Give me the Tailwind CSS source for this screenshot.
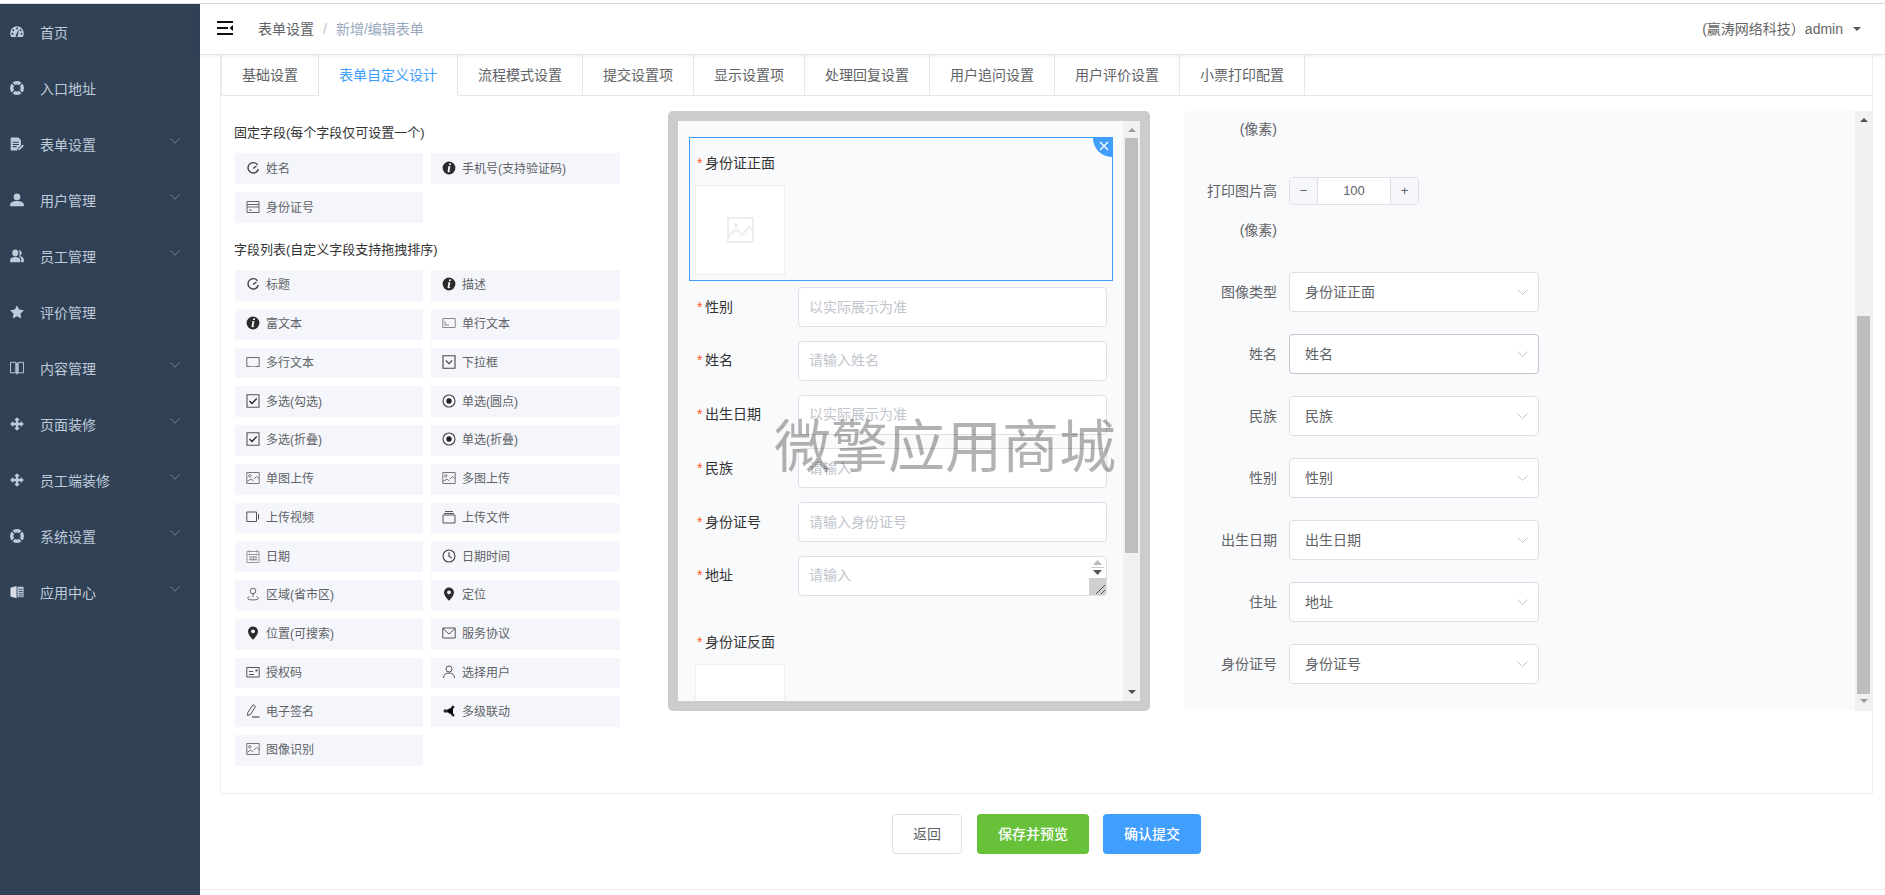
<!DOCTYPE html>
<html lang="zh">
<head>
<meta charset="utf-8">
<title>新增/编辑表单</title>
<script src="https://cdn.jsdelivr.net/npm/@tailwindcss/browser@4"></script>
</head>
<body class="font-['Liberation_Sans','Noto_Sans_CJK_SC',sans-serif] bg-white text-[14px] text-[#606266]">
<svg class="hidden" xmlns="http://www.w3.org/2000/svg">
<defs>
<symbol id="s-gauge" viewBox="0 0 16 16"><path fill="currentColor" d="M8 1.500A7.800 7.800 0 0 0 .2 9.300c0 1.700.5 3.100 1.200 4.300h13.200c.7-1.200 1.200-2.600 1.200-4.300A7.800 7.800 0 0 0 8 1.500z"/><g fill="#304156"><circle cx="8" cy="4" r="1.100"/><circle cx="3.800" cy="6" r="1.100"/><circle cx="12.200" cy="6" r="1.100"/><circle cx="2.800" cy="10" r="1.100"/><circle cx="13.200" cy="10" r="1.100"/><path d="M7 11l2.500-5 .6.3L9 11.500a1.300 1.300 0 1 1-2-.5z"/></g></symbol>
<symbol id="s-ring" viewBox="0 0 16 16"><circle cx="8" cy="8" r="6" fill="none" stroke="currentColor" stroke-width="4"/><path stroke="#304156" stroke-width="1.400" d="M2 2l3.300 3.300M14 2l-3.300 3.300M2 14l3.300-3.300M14 14l-3.300-3.300"/></symbol>
<symbol id="s-doc" viewBox="0 0 16 16"><path fill="currentColor" d="M.8.500h8.700l3 3v5.800L8.500 13.500V15.500H.8z"/><path stroke="#304156" stroke-width="1.200" d="M3 6h7M3 8.500h7M3 11h4.500"/><path fill="currentColor" d="M9.500 15.200l.4-2 4.600-4.600 1.400 1.400-4.500 4.700z"/></symbol>
<symbol id="s-user" viewBox="0 0 16 16"><circle cx="8" cy="4.500" r="3.800" fill="currentColor"/><path fill="currentColor" d="M.2 15v-2c0-2.600 3.300-4 7.800-4s7.800 1.400 7.800 4v2z"/></symbol>
<symbol id="s-users" viewBox="0 0 16 16"><ellipse cx="6" cy="4.500" rx="3.500" ry="4" fill="currentColor"/><path fill="currentColor" d="M.2 15v-2.500C.2 10.300 2.800 9 6 9s5.800 1.300 5.800 3.500V15z"/><path fill="currentColor" d="M10 1c2 .2 3.400 1.700 3.400 3.600 0 1.600-1 2.900-2.300 3.400 2.800.5 4.700 2 4.700 3.900V15h-3v-3c0-1.500-1-2.700-2.500-3.400C11.200 7.400 11.300 3 10 1z"/></symbol>
<symbol id="s-star" viewBox="0 0 16 16"><path fill="currentColor" d="M8 .2l2.400 5 5.500.8-4 3.900 1 5.500L8 12.800l-4.900 2.600 1-5.500-4-3.900 5.500-.8z"/></symbol>
<symbol id="s-book" viewBox="0 0 16 16"><path fill="none" stroke="currentColor" stroke-width="1.100" d="M.6 1.500h6v12h-6zM9.400 1.500h6v12h-6z"/><path stroke="currentColor" stroke-width="2" d="M8 2v13"/></symbol>
<symbol id="s-move" viewBox="0 0 16 16"><path fill="currentColor" d="M8 .2l3.500 3.500H9.300v3h3V4.500L15.800 8l-3.500 3.500V9.300h-3v3h2.200L8 15.800l-3.500-3.500h2.200v-3h-3v2.200L.2 8l3.500-3.500v2.200h3v-3H4.500z"/></symbol>
<symbol id="s-app" viewBox="0 0 16 16"><path fill="#d5dde6" d="M.5 3l7-2v14l-7-2z"/><path fill="currentColor" d="M8.500 2h7v12h-7z"/><path stroke="#304156" stroke-width="1" d="M10 5h4.500M10 7.500h4.500M10 10h4.500M10 12.500h4.500"/></symbol>

<symbol id="i-c" viewBox="0 0 14 14"><path fill="none" stroke="#444" stroke-width="1.400" d="M11.500 3.800A5.200 5.200 0 1 0 12.300 8"/><path fill="none" stroke="#444" stroke-width="1.300" d="M7 7.500l3.500-2.500"/></symbol>
<symbol id="i-info" viewBox="0 0 14 14"><circle cx="7" cy="7" r="6.400" fill="#2b2b2b"/><path fill="#fff" d="M7.200 2.400h1.900l-.3 1.700H6.900zM6.500 5.200h1.900L7.400 10c0 .3.300.3.800 0l.1.600c-1 .8-2.700 1-2.700-.3l.8-4.300h-.8z"/></symbol>
<symbol id="i-card" viewBox="0 0 14 14"><path fill="none" stroke="#666" stroke-width="1" d="M1 1.500h12v11H1zM1 4.500h12M1 7h12M3 10h3"/></symbol>
<symbol id="i-input" viewBox="0 0 14 14"><path fill="none" stroke="#888" stroke-width="1" d="M.8 2.500h12.400v9H.8zM3 5v4h4"/></symbol>
<symbol id="i-area" viewBox="0 0 14 14"><path fill="none" stroke="#666" stroke-width="1" d="M.8 11.500v-9h12.400v9M.8 11.500h3M10 11.500h3.200"/><path stroke="#999" d="M4 11.500h6"/></symbol>
<symbol id="i-select" viewBox="0 0 14 14"><path fill="none" stroke="#444" stroke-width="1.100" d="M1 .8h12v12.400H1zM3.800 5.500L7 8.700l3.200-3.200"/></symbol>
<symbol id="i-check" viewBox="0 0 14 14"><path fill="none" stroke="#555" stroke-width="1.100" d="M1 .8h12v12.400H1z"/><path fill="none" stroke="#222" stroke-width="1.300" d="M3.500 7l2.500 2.500 4.700-5"/></symbol>
<symbol id="i-radio" viewBox="0 0 14 14"><circle cx="7" cy="7" r="6" fill="none" stroke="#444" stroke-width="1.100"/><circle cx="7" cy="7" r="2.700" fill="#222"/></symbol>
<symbol id="i-image" viewBox="0 0 14 14"><path fill="none" stroke="#777" stroke-width="1" d="M.8 1.500h12.400v11H.8zM.8 10.500L5 8l2.500 2M8 8l2.500-2.500 2.700 2"/><circle cx="3.800" cy="4.800" r="1.200" fill="none" stroke="#777"/></symbol>
<symbol id="i-video" viewBox="0 0 14 14"><path fill="none" stroke="#555" stroke-width="1" d="M.8 2h9.700v9.500H.8zM12.500 4v5.500"/></symbol>
<symbol id="i-file" viewBox="0 0 14 14"><path fill="none" stroke="#555" stroke-width="1" d="M1 5h12v8H1z"/><path stroke="#555" stroke-width="1.100" d="M3 1.500h8M2 3.500h10"/></symbol>
<symbol id="i-cal" viewBox="0 0 14 14"><path fill="none" stroke="#999" stroke-width="1" d="M1 2.500h12v11H1zM1 5.500h12M3.500 1v2.500M10.500 1v2.500M3 8h8M3 10.500h8M5 7v5M7.500 7v5M10 7v5"/></symbol>
<symbol id="i-clock" viewBox="0 0 14 14"><circle cx="7" cy="7" r="6" fill="none" stroke="#444" stroke-width="1.100"/><path fill="none" stroke="#444" stroke-width="1.100" d="M7 3.300V7.500l2.700 1.500"/></symbol>
<symbol id="i-region" viewBox="0 0 14 14"><circle cx="7" cy="4" r="2.800" fill="none" stroke="#666" stroke-width="1"/><path fill="none" stroke="#666" stroke-width="1" d="M7 6.800V10M3.500 9.500C2 10 1.500 11 2 12c.8 1.200 9.200 1.200 10 0 .5-1-.2-2-1.500-2.500"/></symbol>
<symbol id="i-pin" viewBox="0 0 14 14"><path fill="#2b2b2b" d="M7 .5a5 5 0 0 0-5 5C2 9 7 13.800 7 13.800S12 9 12 5.500a5 5 0 0 0-5-5z"/><circle cx="7" cy="5.300" r="1.900" fill="#f4f6fb"/></symbol>
<symbol id="i-mail" viewBox="0 0 14 14"><path fill="none" stroke="#555" stroke-width="1" d="M.8 2h12.400v10H.8zM1 2.500L7 8l6-5.500"/></symbol>
<symbol id="i-auth" viewBox="0 0 14 14"><path fill="none" stroke="#555" stroke-width="1" d="M.8 2.500h12.400v9.500H.8zM3 9.500h5M3 6.500h4"/><path stroke="#222" stroke-width="1.500" d="M9.500 5.500h2"/></symbol>
<symbol id="i-person" viewBox="0 0 14 14"><circle cx="7" cy="4" r="3" fill="none" stroke="#555" stroke-width="1"/><path fill="none" stroke="#555" stroke-width="1" d="M1.500 13c0-3.500 2.500-5 5.500-5s5.500 1.500 5.500 5"/></symbol>
<symbol id="i-sign" viewBox="0 0 14 14"><path fill="none" stroke="#555" stroke-width="1" d="M1.500 11.500l.3-3L7 .8l2.500 1.700-5 8z"/><path stroke="#333" stroke-width="1" d="M6 13h7.500"/></symbol>
<symbol id="i-share" viewBox="0 0 14 14"><path stroke="#333" stroke-width="1" d="M11 3L3.500 7l7.500 4"/><circle cx="11" cy="3" r="1.500" fill="#2b2b2b"/><circle cx="3.300" cy="7" r="1.800" fill="#2b2b2b"/><circle cx="11" cy="11" r="1.500" fill="#2b2b2b"/></symbol>
</defs>
</svg>

<div class="flex h-[895px] w-[1885px] flex-col overflow-hidden">
  <div class="h-[4px] shrink-0 border-b border-[#dcdcdc] bg-white"></div>
  <div class="flex min-h-0 flex-1">
    <!-- sidebar -->
    <aside class="w-[200px] shrink-0 bg-[#304156] text-[#bfcbd9]">
      <div class="flex h-[56px] items-center pl-[10px]"><svg class="size-[14px]"><use href="#s-gauge"/></svg><span class="ml-[16px] pt-[2px]">首页</span></div>
      <div class="flex h-[56px] items-center pl-[10px]"><svg class="size-[14px]"><use href="#s-ring"/></svg><span class="ml-[16px] pt-[2px]">入口地址</span></div>
      <div class="flex h-[56px] items-center pl-[10px]"><svg class="size-[14px]"><use href="#s-doc"/></svg><span class="ml-[16px] flex-1 pt-[2px]">表单设置</span><svg class="mr-[20px] mb-[6px] h-[6px] w-[10px]" viewBox="0 0 10 6"><path fill="none" stroke="#6f7f91" d="M.5.500L5 5.200 9.500.500"/></svg></div>
      <div class="flex h-[56px] items-center pl-[10px]"><svg class="size-[14px]"><use href="#s-user"/></svg><span class="ml-[16px] flex-1 pt-[2px]">用户管理</span><svg class="mr-[20px] mb-[6px] h-[6px] w-[10px]" viewBox="0 0 10 6"><path fill="none" stroke="#6f7f91" d="M.5.500L5 5.200 9.500.500"/></svg></div>
      <div class="flex h-[56px] items-center pl-[10px]"><svg class="size-[14px]"><use href="#s-users"/></svg><span class="ml-[16px] flex-1 pt-[2px]">员工管理</span><svg class="mr-[20px] mb-[6px] h-[6px] w-[10px]" viewBox="0 0 10 6"><path fill="none" stroke="#6f7f91" d="M.5.500L5 5.200 9.500.500"/></svg></div>
      <div class="flex h-[56px] items-center pl-[10px]"><svg class="size-[14px]"><use href="#s-star"/></svg><span class="ml-[16px] pt-[2px]">评价管理</span></div>
      <div class="flex h-[56px] items-center pl-[10px]"><svg class="size-[14px]"><use href="#s-book"/></svg><span class="ml-[16px] flex-1 pt-[2px]">内容管理</span><svg class="mr-[20px] mb-[6px] h-[6px] w-[10px]" viewBox="0 0 10 6"><path fill="none" stroke="#6f7f91" d="M.5.500L5 5.200 9.500.500"/></svg></div>
      <div class="flex h-[56px] items-center pl-[10px]"><svg class="size-[14px]"><use href="#s-move"/></svg><span class="ml-[16px] flex-1 pt-[2px]">页面装修</span><svg class="mr-[20px] mb-[6px] h-[6px] w-[10px]" viewBox="0 0 10 6"><path fill="none" stroke="#6f7f91" d="M.5.500L5 5.200 9.500.500"/></svg></div>
      <div class="flex h-[56px] items-center pl-[10px]"><svg class="size-[14px]"><use href="#s-move"/></svg><span class="ml-[16px] flex-1 pt-[2px]">员工端装修</span><svg class="mr-[20px] mb-[6px] h-[6px] w-[10px]" viewBox="0 0 10 6"><path fill="none" stroke="#6f7f91" d="M.5.500L5 5.200 9.500.500"/></svg></div>
      <div class="flex h-[56px] items-center pl-[10px]"><svg class="size-[14px]"><use href="#s-ring"/></svg><span class="ml-[16px] flex-1 pt-[2px]">系统设置</span><svg class="mr-[20px] mb-[6px] h-[6px] w-[10px]" viewBox="0 0 10 6"><path fill="none" stroke="#6f7f91" d="M.5.500L5 5.200 9.500.500"/></svg></div>
      <div class="flex h-[56px] items-center pl-[10px]"><svg class="size-[14px]"><use href="#s-app"/></svg><span class="ml-[16px] flex-1 pt-[2px]">应用中心</span><svg class="mr-[20px] mb-[6px] h-[6px] w-[10px]" viewBox="0 0 10 6"><path fill="none" stroke="#6f7f91" d="M.5.500L5 5.200 9.500.500"/></svg></div>
    </aside>

    <main class="flex min-w-0 flex-1 flex-col">
      <!-- header -->
      <header class="relative z-10 flex h-[51px] shrink-0 items-center border-b border-[#e6e6e6] bg-white pl-[17px] pr-[24px] shadow-[0_1px_4px_rgba(0,21,41,0.08)]">
        <svg class="mb-[2px] h-[14px] w-[16px]" viewBox="0 0 16 14"><path fill="none" stroke="#111" stroke-width="1.800" d="M0 1h16M0 7h11M0 13h16"/><path fill="#111" d="M16 4v6l-3.500-3z"/></svg>
        <span class="ml-[25px] text-[#606266]">表单设置</span>
        <span class="mx-[9px] text-[#c0c4cc]">/</span>
        <span class="text-[#97a8be]">新增/编辑表单</span>
        <span class="ml-auto text-[#666]">(赢涛网络科技）admin</span>
        <svg class="ml-[10px] h-[4px] w-[8px]" viewBox="0 0 8 4"><path fill="#555" d="M0 0h8L4 4z"/></svg>
      </header>

      <!-- card -->
      <div class="ml-[20px] h-[739px] w-[1653px] shrink-0 border-x border-b border-[#ebeef5] bg-white">
        <div class="flex h-[41px] border-b border-[#e4e7ed]">
          <div class="flex h-[40px] items-center rounded-tl-[3px] border-x border-[#e4e7ed] px-[20px]">基础设置</div>
          <div class="flex h-[41px] items-center border-r border-b border-r-[#e4e7ed] border-b-white bg-white px-[20px] text-[#409eff]">表单自定义设计</div>
          <div class="flex h-[40px] items-center border-r border-[#e4e7ed] px-[20px]">流程模式设置</div>
          <div class="flex h-[40px] items-center border-r border-[#e4e7ed] px-[20px]">提交设置项</div>
          <div class="flex h-[40px] items-center border-r border-[#e4e7ed] px-[20px]">显示设置项</div>
          <div class="flex h-[40px] items-center border-r border-[#e4e7ed] px-[20px]">处理回复设置</div>
          <div class="flex h-[40px] items-center border-r border-[#e4e7ed] px-[20px]">用户追问设置</div>
          <div class="flex h-[40px] items-center border-r border-[#e4e7ed] px-[20px]">用户评价设置</div>
          <div class="flex h-[40px] items-center border-r border-[#e4e7ed] px-[20px]">小票打印配置</div>
        </div>

        <div class="flex">
          <!-- fields -->
          <section class="w-[447px] shrink-0 pl-[13px] text-[12px] text-[#606266]">
            <h3 class="mt-[27px] mb-[10px] h-[20px] text-[13px] leading-[20px] font-normal text-[#333]">固定字段(每个字段仅可设置一个)</h3>
            <div class="ml-[1px] grid w-[385px] grid-cols-[188px_189px] gap-x-[8px] gap-y-[8px] [&_svg]:mb-[2px]">
              <div class="flex h-[31px] items-center bg-[#f4f6fb] pl-[11px]"><svg class="size-[14px] shrink-0"><use href="#i-c"/></svg><span class="ml-[6px]">姓名</span></div>
              <div class="flex h-[31px] items-center bg-[#f4f6fb] pl-[11px]"><svg class="size-[14px] shrink-0"><use href="#i-info"/></svg><span class="ml-[6px]">手机号(支持验证码)</span></div>
              <div class="flex h-[31px] items-center bg-[#f4f6fb] pl-[11px]"><svg class="size-[14px] shrink-0"><use href="#i-card"/></svg><span class="ml-[6px]">身份证号</span></div>
            </div>
            <h3 class="mt-[17px] mb-[10px] h-[20px] text-[13px] leading-[20px] font-normal text-[#333]">字段列表(自定义字段支持拖拽排序)</h3>
            <div class="ml-[1px] grid w-[385px] grid-cols-[188px_189px] gap-x-[8px] gap-y-[8px] [&_svg]:mb-[2px]">
              <div class="flex h-[30.75px] items-center bg-[#f4f6fb] pl-[11px]"><svg class="size-[14px] shrink-0"><use href="#i-c"/></svg><span class="ml-[6px]">标题</span></div>
              <div class="flex h-[30.75px] items-center bg-[#f4f6fb] pl-[11px]"><svg class="size-[14px] shrink-0"><use href="#i-info"/></svg><span class="ml-[6px]">描述</span></div>
              <div class="flex h-[30.75px] items-center bg-[#f4f6fb] pl-[11px]"><svg class="size-[14px] shrink-0"><use href="#i-info"/></svg><span class="ml-[6px]">富文本</span></div>
              <div class="flex h-[30.75px] items-center bg-[#f4f6fb] pl-[11px]"><svg class="size-[14px] shrink-0"><use href="#i-input"/></svg><span class="ml-[6px]">单行文本</span></div>
              <div class="flex h-[30.75px] items-center bg-[#f4f6fb] pl-[11px]"><svg class="size-[14px] shrink-0"><use href="#i-area"/></svg><span class="ml-[6px]">多行文本</span></div>
              <div class="flex h-[30.75px] items-center bg-[#f4f6fb] pl-[11px]"><svg class="size-[14px] shrink-0"><use href="#i-select"/></svg><span class="ml-[6px]">下拉框</span></div>
              <div class="flex h-[30.75px] items-center bg-[#f4f6fb] pl-[11px]"><svg class="size-[14px] shrink-0"><use href="#i-check"/></svg><span class="ml-[6px]">多选(勾选)</span></div>
              <div class="flex h-[30.75px] items-center bg-[#f4f6fb] pl-[11px]"><svg class="size-[14px] shrink-0"><use href="#i-radio"/></svg><span class="ml-[6px]">单选(圆点)</span></div>
              <div class="flex h-[30.75px] items-center bg-[#f4f6fb] pl-[11px]"><svg class="size-[14px] shrink-0"><use href="#i-check"/></svg><span class="ml-[6px]">多选(折叠)</span></div>
              <div class="flex h-[30.75px] items-center bg-[#f4f6fb] pl-[11px]"><svg class="size-[14px] shrink-0"><use href="#i-radio"/></svg><span class="ml-[6px]">单选(折叠)</span></div>
              <div class="flex h-[30.75px] items-center bg-[#f4f6fb] pl-[11px]"><svg class="size-[14px] shrink-0"><use href="#i-image"/></svg><span class="ml-[6px]">单图上传</span></div>
              <div class="flex h-[30.75px] items-center bg-[#f4f6fb] pl-[11px]"><svg class="size-[14px] shrink-0"><use href="#i-image"/></svg><span class="ml-[6px]">多图上传</span></div>
              <div class="flex h-[30.75px] items-center bg-[#f4f6fb] pl-[11px]"><svg class="size-[14px] shrink-0"><use href="#i-video"/></svg><span class="ml-[6px]">上传视频</span></div>
              <div class="flex h-[30.75px] items-center bg-[#f4f6fb] pl-[11px]"><svg class="size-[14px] shrink-0"><use href="#i-file"/></svg><span class="ml-[6px]">上传文件</span></div>
              <div class="flex h-[30.75px] items-center bg-[#f4f6fb] pl-[11px]"><svg class="size-[14px] shrink-0"><use href="#i-cal"/></svg><span class="ml-[6px]">日期</span></div>
              <div class="flex h-[30.75px] items-center bg-[#f4f6fb] pl-[11px]"><svg class="size-[14px] shrink-0"><use href="#i-clock"/></svg><span class="ml-[6px]">日期时间</span></div>
              <div class="flex h-[30.75px] items-center bg-[#f4f6fb] pl-[11px]"><svg class="size-[14px] shrink-0"><use href="#i-region"/></svg><span class="ml-[6px]">区域(省市区)</span></div>
              <div class="flex h-[30.75px] items-center bg-[#f4f6fb] pl-[11px]"><svg class="size-[14px] shrink-0"><use href="#i-pin"/></svg><span class="ml-[6px]">定位</span></div>
              <div class="flex h-[30.75px] items-center bg-[#f4f6fb] pl-[11px]"><svg class="size-[14px] shrink-0"><use href="#i-pin"/></svg><span class="ml-[6px]">位置(可搜索)</span></div>
              <div class="flex h-[30.75px] items-center bg-[#f4f6fb] pl-[11px]"><svg class="size-[14px] shrink-0"><use href="#i-mail"/></svg><span class="ml-[6px]">服务协议</span></div>
              <div class="flex h-[30.75px] items-center bg-[#f4f6fb] pl-[11px]"><svg class="size-[14px] shrink-0"><use href="#i-auth"/></svg><span class="ml-[6px]">授权码</span></div>
              <div class="flex h-[30.75px] items-center bg-[#f4f6fb] pl-[11px]"><svg class="size-[14px] shrink-0"><use href="#i-person"/></svg><span class="ml-[6px]">选择用户</span></div>
              <div class="flex h-[30.75px] items-center bg-[#f4f6fb] pl-[11px]"><svg class="size-[14px] shrink-0"><use href="#i-sign"/></svg><span class="ml-[6px]">电子签名</span></div>
              <div class="flex h-[30.75px] items-center bg-[#f4f6fb] pl-[11px]"><svg class="size-[14px] shrink-0"><use href="#i-share"/></svg><span class="ml-[6px]">多级联动</span></div>
              <div class="flex h-[30.75px] items-center bg-[#f4f6fb] pl-[11px]"><svg class="size-[14px] shrink-0"><use href="#i-image"/></svg><span class="ml-[6px]">图像识别</span></div>
            </div>
          </section>

          <!-- phone -->
          <section class="relative mt-[15px] flex h-[600px] w-[482px] shrink-0 rounded-[5px] border-[10px] border-[#cccccc] bg-[#f9fafc]">
            <div class="h-full w-[445px] shrink-0 overflow-hidden">
              <div class="relative mt-[16px] ml-[11px] w-[424px] border border-[#409eff] pt-[15px] pb-[5px]">
                <div class="absolute top-0 right-0 flex size-[19px] items-start justify-end rounded-bl-full bg-[#409eff] pt-[3px] pr-[3px]"><svg class="size-[10px]" viewBox="0 0 10 10"><path stroke="#fff" stroke-width="1.300" d="M1 1l8 8M9 1l-8 8"/></svg></div>
                <div class="flex h-[20px] items-center pl-[7px] text-[#333]"><span class="w-[8px] text-[#ff5722]">*</span>身份证正面</div>
                <div class="mt-[12px] ml-[5px] flex size-[90px] items-center justify-center border border-[#eeeeee] bg-white"><svg class="h-[26px] w-[27px]" viewBox="0 0 27 26"><path fill="none" stroke="#eeeeee" stroke-width="2" d="M1 1h25v24H1zM1 20l8-8 6 6 7-8 4 4"/><circle cx="9" cy="8" r="2" fill="#eeeeee"/></svg></div>
              </div>
              <div class="mt-[6px] flex flex-col gap-[13.8px] pl-[19px]">
                <div class="flex items-center text-[#333]"><span class="w-[8px] text-[#ff5722]">*</span><span class="w-[93px]">性别</span><div class="flex h-[40px] w-[309px] items-center rounded-[4px] border border-[#dcdfe6] bg-white pl-[10px] text-[#c0c4cc]">以实际展示为准</div></div>
                <div class="flex items-center text-[#333]"><span class="w-[8px] text-[#ff5722]">*</span><span class="w-[93px]">姓名</span><div class="flex h-[40px] w-[309px] items-center rounded-[4px] border border-[#dcdfe6] bg-white pl-[10px] text-[#c0c4cc]">请输入姓名</div></div>
                <div class="flex items-center text-[#333]"><span class="w-[8px] text-[#ff5722]">*</span><span class="w-[93px]">出生日期</span><div class="flex h-[40px] w-[309px] items-center rounded-[4px] border border-[#dcdfe6] bg-white pl-[10px] text-[#c0c4cc]">以实际展示为准</div></div>
                <div class="flex items-center text-[#333]"><span class="w-[8px] text-[#ff5722]">*</span><span class="w-[93px]">民族</span><div class="flex h-[40px] w-[309px] items-center rounded-[4px] border border-[#dcdfe6] bg-white pl-[10px] text-[#c0c4cc]">请输入</div></div>
                <div class="flex items-center text-[#333]"><span class="w-[8px] text-[#ff5722]">*</span><span class="w-[93px]">身份证号</span><div class="flex h-[40px] w-[309px] items-center rounded-[4px] border border-[#dcdfe6] bg-white pl-[10px] text-[#c0c4cc]">请输入身份证号</div></div>
                <div class="flex items-center text-[#333]"><span class="w-[8px] text-[#ff5722]">*</span><span class="w-[93px]">地址</span>
                  <div class="relative flex h-[40px] w-[309px] items-center overflow-hidden rounded-[4px] border border-[#dcdfe6] bg-white pl-[10px] text-[#c0c4cc]">请输入
                    <div class="absolute top-0 right-0 flex h-full w-[17px] flex-col">
                      <div class="flex h-[21px] flex-col items-center justify-center gap-[2px]"><svg class="h-[5px] w-[9px]" viewBox="0 0 9 5"><path fill="#bbb" d="M4.500 0l4.500 5H0z"/></svg><div class="h-px w-[13px] bg-[#ccc]"></div><svg class="h-[5px] w-[9px]" viewBox="0 0 9 5"><path fill="#555" d="M0 0h9L4.500 5z"/></svg></div>
                      <div class="flex flex-1 items-end justify-end bg-[#cfcfcf]"><svg class="size-[12px]" viewBox="0 0 12 12"><path stroke="#555" d="M2 11l9-9M7 11l4-4"/></svg></div>
                    </div>
                  </div>
                </div>
              </div>
              <div class="mt-[37px] flex h-[20px] items-center pl-[19px] text-[#333]"><span class="w-[8px] text-[#ff5722]">*</span>身份证反面</div>
              <div class="mt-[11px] ml-[17px] size-[90px] border border-[#eeeeee] bg-white"></div>
            </div>
            <div class="flex w-[17px] shrink-0 flex-col items-center bg-[#f1f1f1]">
              <svg class="mt-[7px] h-[4px] w-[8px]" viewBox="0 0 8 4"><path fill="#999" d="M4 0l4 4H0z"/></svg>
              <div class="mt-[6px] h-[415px] w-[13px] bg-[#bebebe]"></div>
              <svg class="mt-[137px] h-[4px] w-[8px]" viewBox="0 0 8 4"><path fill="#505050" d="M0 0h8L4 4z"/></svg>
            </div>
            <div class="pointer-events-none absolute top-[298px] left-[96px] text-[57px] leading-[56px] font-normal whitespace-nowrap text-[#000]/30">微擎应用商城</div>
          </section>

          <!-- right panel -->
          <section class="mt-[15px] ml-[34px] flex h-[600px] w-[688px] shrink-0 rounded-l-[4px] bg-[#f9fafc]">
            <div class="w-[671px] shrink-0 overflow-hidden pt-[8px]">
              <div class="flex h-[20px] items-center"><span class="w-[93px] text-right">(像素)</span></div>
              <div class="mt-[38px] flex items-center"><span class="mr-[12px] w-[93px] text-right">打印图片高</span>
                <div class="flex h-[28px] w-[130px] overflow-hidden rounded-[4px] border border-[#dcdfe6] bg-white text-[13px]">
                  <div class="flex w-[28px] items-center justify-center border-r border-[#dcdfe6] bg-[#f5f7fa]">−</div>
                  <div class="flex flex-1 items-center justify-center">100</div>
                  <div class="flex w-[28px] items-center justify-center border-l border-[#dcdfe6] bg-[#f5f7fa]">+</div>
                </div>
              </div>
              <div class="mt-[15px] flex h-[20px] items-center"><span class="w-[93px] text-right">(像素)</span></div>
              <div class="mt-[32px] flex flex-col gap-[22px]">
                <div class="flex items-center"><span class="mr-[12px] w-[93px] text-right">图像类型</span><div class="flex h-[40px] w-[250px] items-center justify-between rounded-[4px] border border-[#dcdfe6] bg-white pr-[10px] pl-[15px]">身份证正面<svg class="h-[6px] w-[11px]" viewBox="0 0 11 6"><path fill="none" stroke="#c0c4cc" d="M.5.500l5 5 5-5"/></svg></div></div>
                <div class="flex items-center"><span class="mr-[12px] w-[93px] text-right">姓名</span><div class="flex h-[40px] w-[250px] items-center justify-between rounded-[4px] border border-[#c0c4cc] bg-white pr-[10px] pl-[15px]">姓名<svg class="h-[6px] w-[11px]" viewBox="0 0 11 6"><path fill="none" stroke="#c0c4cc" d="M.5.500l5 5 5-5"/></svg></div></div>
                <div class="flex items-center"><span class="mr-[12px] w-[93px] text-right">民族</span><div class="flex h-[40px] w-[250px] items-center justify-between rounded-[4px] border border-[#dcdfe6] bg-white pr-[10px] pl-[15px]">民族<svg class="h-[6px] w-[11px]" viewBox="0 0 11 6"><path fill="none" stroke="#c0c4cc" d="M.5.500l5 5 5-5"/></svg></div></div>
                <div class="flex items-center"><span class="mr-[12px] w-[93px] text-right">性别</span><div class="flex h-[40px] w-[250px] items-center justify-between rounded-[4px] border border-[#dcdfe6] bg-white pr-[10px] pl-[15px]">性别<svg class="h-[6px] w-[11px]" viewBox="0 0 11 6"><path fill="none" stroke="#c0c4cc" d="M.5.500l5 5 5-5"/></svg></div></div>
                <div class="flex items-center"><span class="mr-[12px] w-[93px] text-right">出生日期</span><div class="flex h-[40px] w-[250px] items-center justify-between rounded-[4px] border border-[#dcdfe6] bg-white pr-[10px] pl-[15px]">出生日期<svg class="h-[6px] w-[11px]" viewBox="0 0 11 6"><path fill="none" stroke="#c0c4cc" d="M.5.500l5 5 5-5"/></svg></div></div>
                <div class="flex items-center"><span class="mr-[12px] w-[93px] text-right">住址</span><div class="flex h-[40px] w-[250px] items-center justify-between rounded-[4px] border border-[#dcdfe6] bg-white pr-[10px] pl-[15px]">地址<svg class="h-[6px] w-[11px]" viewBox="0 0 11 6"><path fill="none" stroke="#c0c4cc" d="M.5.500l5 5 5-5"/></svg></div></div>
                <div class="flex items-center"><span class="mr-[12px] w-[93px] text-right">身份证号</span><div class="flex h-[40px] w-[250px] items-center justify-between rounded-[4px] border border-[#dcdfe6] bg-white pr-[10px] pl-[15px]">身份证号<svg class="h-[6px] w-[11px]" viewBox="0 0 11 6"><path fill="none" stroke="#c0c4cc" d="M.5.500l5 5 5-5"/></svg></div></div>
              </div>
            </div>
            <div class="flex w-[17px] shrink-0 flex-col items-center bg-[#f1f1f1]">
              <svg class="mt-[7px] h-[4px] w-[8px]" viewBox="0 0 8 4"><path fill="#505050" d="M4 0l4 4H0z"/></svg>
              <div class="mt-[194px] h-[378px] w-[13px] bg-[#bebebe]"></div>
              <svg class="mt-[5px] h-[4px] w-[8px]" viewBox="0 0 8 4"><path fill="#999" d="M0 0h8L4 4z"/></svg>
            </div>
          </section>
        </div>
      </div>

      <!-- actions -->
      <div class="mt-[20px] flex shrink-0 pl-[692px]">
        <button class="flex h-[40px] w-[70px] items-center justify-center rounded-[4px] border border-[#dcdfe6] bg-white text-[#606266]">返回</button>
        <button class="ml-[15px] flex h-[40px] w-[112px] items-center justify-center rounded-[4px] bg-[#67c23a] font-medium text-white">保存并预览</button>
        <button class="ml-[14px] flex h-[40px] w-[98px] items-center justify-center rounded-[4px] bg-[#409eff] font-medium text-white">确认提交</button>
      </div>
      <div class="mt-[35px] h-px shrink-0 bg-[#eeeeee]"></div>
    </main>
  </div>
</div>
</body>
</html>
